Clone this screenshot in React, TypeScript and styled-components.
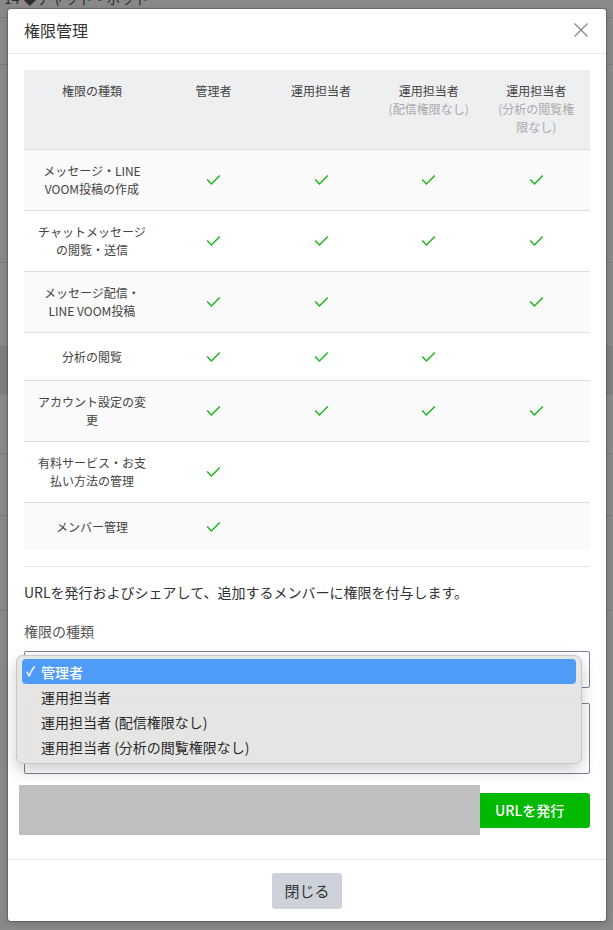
import React from "react";
import styled, { createGlobalStyle } from "styled-components";

const GlobalStyle = createGlobalStyle`
  html, body {
    margin: 0;
    padding: 0;
    background: #898989;
    font-family: "Noto Sans CJK JP", "Noto Sans", "Liberation Sans", sans-serif;
  }
  * { box-sizing: border-box; }
`;

const Page = styled.div`
  position: relative;
  height: 930px;
  overflow: hidden;
`;

const BackRow = styled.div<{ h: number; dark?: boolean }>`
  height: ${(p) => p.h}px;
  border-bottom: 1px solid #7b7b7b;
  background: ${(p) => (p.dark ? "#7f7f7f" : "transparent")};
`;

const BackTitle = styled.div`
  margin-top: -9px;
  padding-left: 4px;
  font-size: 14px;
  line-height: 14px;
  color: #2c2c2c;
`;

const Overlay = styled.div`
  position: absolute;
  inset: 0;
  padding: 9px 7px 9px 8px;
  display: flex;
  align-items: flex-start;
`;

const Modal = styled.div`
  width: 598px;
  height: 912px;
  background: #fff;
  border-radius: 3px;
  box-shadow: 0 0 0 1px rgba(0, 0, 0, 0.18), 0 2px 6px rgba(0, 0, 0, 0.2);
  display: flex;
  flex-direction: column;
`;

const Header = styled.div`
  height: 45px;
  flex-shrink: 0;
  display: flex;
  align-items: center;
  justify-content: space-between;
  padding: 0 17px 3px 16px;
  border-bottom: 1px solid #e8e8e8;
`;

const Title = styled.h1`
  margin: 0;
  font-size: 16px;
  font-weight: 400;
  color: #333;
`;

const CloseIcon = styled.svg`
  width: 16px;
  height: 16px;
  display: block;
`;

const Body = styled.div`
  flex: 1;
  padding: 16px 16px 0;
`;

const Table = styled.table`
  width: 100%;
  border-collapse: collapse;
  table-layout: fixed;
  font-size: 12px;
  line-height: 18px;
  color: #444;
`;

const Th = styled.th<{ first?: boolean }>`
  width: ${(p) => (p.first ? "24%" : "19%")};
  background: #eeeff1;
  padding: 12px 10px 13px;
  font-weight: 400;
  vertical-align: top;
  text-align: center;
  border-bottom: 1px solid #dcdde2;
`;

const Sub = styled.span`
  color: #aaa;
`;

const Tr = styled.tr<{ shaded: boolean }>`
  background: ${(p) => (p.shaded ? "#fafafa" : "#fff")};
  &:not(:last-child) td {
    border-bottom: 1px solid #dcdde2;
  }
`;

const Td = styled.td`
  padding: 12px 10px;
  text-align: center;
  vertical-align: middle;
`;

const CheckWrap = styled.div`
  height: 23px;
  display: flex;
  align-items: center;
  justify-content: center;
`;

const Divider = styled.div`
  margin-top: 16px;
  height: 1px;
  background: #e6e6e6;
`;

const Description = styled.p`
  margin: 15px 0 0;
  font-size: 14px;
  line-height: 21px;
  color: #333;
`;

const Label = styled.div`
  margin-top: 18px;
  font-size: 14px;
  line-height: 21px;
  color: #555;
`;

const SelectWrap = styled.div`
  position: relative;
  margin-top: 9px;
`;

const SelectBox = styled.div`
  height: 37px;
  border: 1px solid #7c8198;
  border-radius: 2px;
  background: #fff;
`;

const TextBox = styled.div`
  margin-top: 15px;
  height: 71px;
  border: 1px solid #7c8198;
  border-radius: 2px;
  background: #fff;
`;

const Menu = styled.ul`
  position: absolute;
  top: 4px;
  left: -8px;
  width: 566px;
  margin: 0;
  padding: 3px 0 4px;
  list-style: none;
  background: rgba(228, 228, 227, 0.98);
  border: 1px solid #c6c6c6;
  border-radius: 7px;
  box-shadow: 0 6px 16px rgba(0, 0, 0, 0.2);
`;

const Option = styled.li<{ selected?: boolean }>`
  position: relative;
  height: 25px;
  margin: 0 5px;
  padding-left: 19px;
  display: flex;
  align-items: center;
  font-size: 14px;
  border-radius: 4px;
  color: ${(p) => (p.selected ? "#fff" : "#2b2b2b")};
  font-weight: ${(p) => (p.selected ? 500 : 400)};
  background: ${(p) => (p.selected ? "#4f9cf8" : "transparent")};
`;

const Tick = styled.span`
  position: absolute;
  left: 4px;
  top: 3px;
  font-size: 13px;
  line-height: 18px;
`;

const UrlRow = styled.div`
  margin-top: 11px;
  margin-left: -5px;
  display: flex;
  align-items: center;
`;

const UrlBlock = styled.div`
  width: 461px;
  height: 50px;
  background: #bfbfbf;
`;

const IssueButton = styled.button`
  width: 110px;
  height: 35px;
  border: none;
  border-radius: 0 3px 3px 0;
  background: #00b900;
  color: #fff;
  font-family: inherit;
  font-size: 14px;
  font-weight: 500;
  text-align: left;
  padding: 0 0 0 15px;
`;

const Footer = styled.div`
  flex-shrink: 0;
  height: 62px;
  border-top: 1px solid #e8e8e8;
  display: flex;
  align-items: center;
  justify-content: center;
`;

const CloseButton = styled.button`
  width: 70px;
  height: 36px;
  border: none;
  border-radius: 3px;
  background: #cdd1d9;
  color: #333;
  font-family: inherit;
  font-size: 15px;
`;

function Check() {
  return (
    <CheckWrap>
      <svg width="15" height="12" viewBox="0 0 15 12">
        <polyline
          points="1.2,5.6 5.4,10 13.8,1.4"
          fill="none"
          stroke="#1fb51f"
          strokeWidth="1.5"
        />
      </svg>
    </CheckWrap>
  );
}

type Row = { label: React.ReactNode; checks: boolean[] };

const rows: Row[] = [
  { label: <>メッセージ・LINE VOOM投稿の作成</>, checks: [true, true, true, true] },
  { label: <>チャットメッセージの閲覧・送信</>, checks: [true, true, true, true] },
  { label: <>メッセージ配信・<br />LINE VOOM投稿</>, checks: [true, true, false, true] },
  { label: <>分析の閲覧</>, checks: [true, true, true, false] },
  { label: <>アカウント設定の変更</>, checks: [true, true, true, true] },
  { label: <>有料サービス・お支払い方法の管理</>, checks: [true, false, false, false] },
  { label: <>メンバー管理</>, checks: [true, false, false, false] },
];

const options = [
  "運用担当者",
  "運用担当者 (配信権限なし)",
  "運用担当者 (分析の閲覧権限なし)",
];

export default function App() {
  return (
    <Page>
      <GlobalStyle />
      <BackRow h={27}>
        <BackTitle>14 ◆チャット・ボット</BackTitle>
      </BackRow>
      <BackRow h={47} />
      <BackRow h={198} />
      <BackRow h={84} />
      <BackRow h={47} dark />
      <BackRow h={60} />
      <BackRow h={62} />
      <BackRow h={95} />

      <Overlay>
        <Modal>
          <Header>
            <Title>権限管理</Title>
            <CloseIcon viewBox="0 0 16 16">
              <path d="M1.5 1.5 L14.5 14.5 M14.5 1.5 L1.5 14.5" stroke="#8a8a8a" strokeWidth="1.4" />
            </CloseIcon>
          </Header>
          <Body>
            <Table>
              <thead>
                <tr>
                  <Th first>権限の種類</Th>
                  <Th>管理者</Th>
                  <Th>運用担当者</Th>
                  <Th>
                    運用担当者
                    <br />
                    <Sub>(配信権限なし)</Sub>
                  </Th>
                  <Th>
                    運用担当者
                    <br />
                    <Sub>(分析の閲覧権限なし)</Sub>
                  </Th>
                </tr>
              </thead>
              <tbody>
                {rows.map((r, i) => (
                  <Tr key={i} shaded={i % 2 === 0}>
                    <Td>{r.label}</Td>
                    {r.checks.map((c, j) => (
                      <Td key={j}>{c ? <Check /> : null}</Td>
                    ))}
                  </Tr>
                ))}
              </tbody>
            </Table>
            <Divider />
            <Description>URLを発行およびシェアして、追加するメンバーに権限を付与します。</Description>
            <Label>権限の種類</Label>
            <SelectWrap>
              <SelectBox />
              <TextBox />
              <Menu>
                <Option selected>
                  <Tick>✓</Tick>管理者
                </Option>
                {options.map((o) => (
                  <Option key={o}>{o}</Option>
                ))}
              </Menu>
            </SelectWrap>
            <UrlRow>
              <UrlBlock />
              <IssueButton>URLを発行</IssueButton>
            </UrlRow>
          </Body>
          <Footer>
            <CloseButton>閉じる</CloseButton>
          </Footer>
        </Modal>
      </Overlay>
    </Page>
  );
}
